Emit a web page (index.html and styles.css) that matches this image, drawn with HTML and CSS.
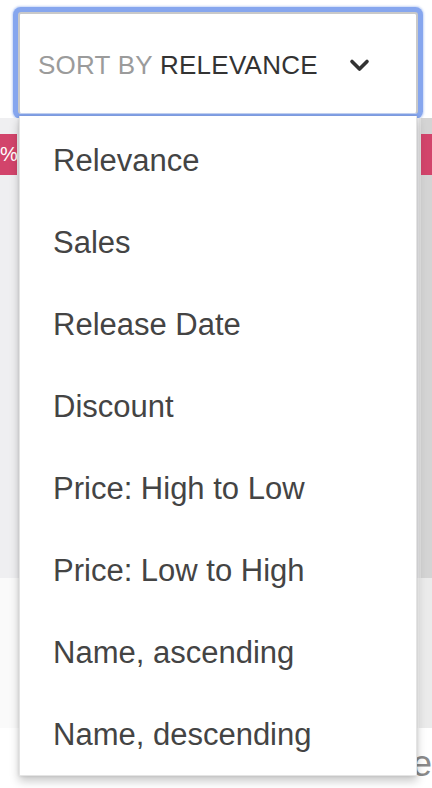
FILE: index.html
```html
<!DOCTYPE html>
<html lang="en">
<head>
<meta charset="utf-8">
<title>Sort by</title>
<link rel="stylesheet" href="styles.css">
</head>
<body>
<div class="page">
  <div class="sort-bar">
    <button class="sort-button" type="button">
      <span class="sort-label"><span class="sort-prefix">SORT BY</span> <span class="sort-value">RELEVANCE</span></span>
      <svg class="chevron" width="22" height="16" viewBox="0 0 22 16" aria-hidden="true">
        <polyline points="3,3.5 10.5,11 18,3.5" fill="none" stroke="#333" stroke-width="3.6" stroke-linecap="round" stroke-linejoin="round"/>
      </svg>
    </button>
  </div>

  <div class="listing">
    <div class="card card-left">
      <span class="badge badge-left">%</span>
    </div>
    <div class="card card-right">
      <span class="badge badge-right"></span>
    </div>
  </div>

  <div class="lower">
    <div class="lower-left"></div>
    <div class="lower-right"></div>
  </div>

  <div class="price-row">
    <span class="price-text">e</span>
  </div>

  <ul class="sort-menu">
    <li class="sort-option">Relevance</li>
    <li class="sort-option">Sales</li>
    <li class="sort-option">Release Date</li>
    <li class="sort-option">Discount</li>
    <li class="sort-option">Price: High to Low</li>
    <li class="sort-option">Price: Low to High</li>
    <li class="sort-option">Name, ascending</li>
    <li class="sort-option">Name, descending</li>
  </ul>
</div>
</body>
</html>
```

FILE: styles.css
```css
* {
  box-sizing: border-box;
}

html, body {
  margin: 0;
  padding: 0;
  background: #ffffff;
}

body {
  font-family: "Liberation Sans", Arial, sans-serif;
  width: 432px;
  height: 788px;
  overflow: hidden;
}

.page {
  position: relative;
  width: 432px;
  height: 788px;
  display: flex;
  flex-direction: column;
}

.sort-bar {
  height: 118px;
  padding: 12px 14px 0 18px;
  background: #ffffff;
}

.sort-button {
  width: 400px;
  height: 102px;
  display: flex;
  align-items: center;
  justify-content: space-between;
  padding: 3px 45px 0 18px;
  background: #ffffff;
  border: 2px solid #c9c9c9;
  border-bottom: 1px solid #c3d2f2;
  border-radius: 3px;
  box-shadow: 0 0 0 5px #86a6ee, 0 0 2px 6px rgba(134, 166, 238, 0.45);
  font-family: inherit;
  cursor: pointer;
}

.sort-label {
  font-size: 26px;
  letter-spacing: 0.25px;
  white-space: nowrap;
}

.sort-prefix {
  color: #9b9b9b;
}

.sort-value {
  color: #333333;
}

.chevron {
  display: block;
  margin-top: 1px;
}

.listing {
  height: 460px;
  display: grid;
  grid-template-columns: 419px 1fr;
  gap: 2px;
  background: #e3e3e3;
}

.card {
  position: relative;
  padding-top: 16px;
  overflow: hidden;
}

.card-left {
  background: #efeff1;
}

.card-right {
  background: #d4d4d4;
}

.badge {
  display: flex;
  align-items: center;
  height: 41px;
  background: #d2446b;
  color: #ffffff;
  font-size: 20px;
  white-space: nowrap;
}

.badge-left {
  width: 17px;
  justify-content: flex-end;
  overflow: hidden;
  direction: rtl;
}

.badge-right {
  width: 60px;
}

.lower {
  height: 150px;
  display: grid;
  grid-template-columns: 419px 1fr;
  gap: 2px;
  background: #eeeeee;
}

.lower-left {
  background: #fafafa;
}

.lower-right {
  background: #ebebeb;
}

.price-row {
  flex: 1;
  display: flex;
  justify-content: flex-end;
  align-items: flex-start;
  background: #ffffff;
  padding-top: 16px;
  overflow: hidden;
}

.price-text {
  font-size: 36px;
  color: #8a8a8a;
  white-space: nowrap;
  line-height: 40px;
}

.sort-menu {
  position: absolute;
  top: 116px;
  left: 19px;
  width: 398px;
  height: 660px;
  margin: 0;
  padding: 4px 0 0 0;
  list-style: none;
  background: #ffffff;
  border: 1px solid #e4e4e4;
  border-top: none;
  box-shadow: 0 5px 9px rgba(0, 0, 0, 0.22), 0 0 3px rgba(0, 0, 0, 0.12);
}

.sort-option {
  height: 82px;
  line-height: 82px;
  padding-left: 33px;
  font-size: 31px;
  color: #444444;
  white-space: nowrap;
}
```
